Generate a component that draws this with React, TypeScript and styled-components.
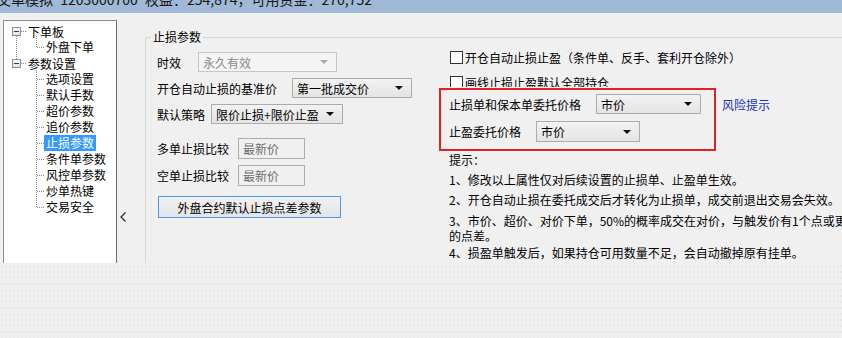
import React from "react";
import styled, { createGlobalStyle, css } from "styled-components";

const GlobalStyle = createGlobalStyle`
  html, body { margin: 0; padding: 0; background: #f0f0f0; }
  body {
    font-family: "Noto Sans CJK SC", "Liberation Sans", sans-serif;
    font-size: 12px;
    color: #000;
  }
  * { box-sizing: border-box; }
`;

const Window = styled.div`
  width: 842px;
  height: 338px;
  overflow: hidden;
  display: flex;
  flex-direction: column;
  background: #f0f0f0;
`;

const TitleBar = styled.div`
  height: 13px;
  flex: none;
  background: #9fb9d6;
  overflow: hidden;
  white-space: nowrap;
`;

const TitleText = styled.div`
  font-size: 14px;
  line-height: 14px;
  margin: -8px 0 0 -3px;
  color: #151515;
  word-spacing: 4px;
`;

const Main = styled.div`
  height: 250px;
  flex: none;
  display: flex;
  overflow: hidden;
`;

const Footer = styled.div`
  flex: 1;
  background-color: #efefef;
  background-image: radial-gradient(#e7e7e7 0.6px, transparent 0.8px);
  background-size: 4px 6px;
`;

/* 左侧树 */
const Tree = styled.div`
  width: 114px;
  height: 262px;
  flex: none;
  margin: 7px 0 0 3px;
  padding-top: 2px;
  background: #fff;
  border: 1px solid #8d8d8d;
  border-right-color: #6f6f6f;
`;

const TreeGroup = styled.div<{ $hasNext?: boolean }>`
  position: relative;
  ${(p) =>
    p.$hasNext &&
    css`
      &::after {
        content: "";
        position: absolute;
        left: 12px;
        top: 13px;
        bottom: -4px;
        border-left: 1px dotted #8c8c8c;
      }
    `}
`;

const NodeRow = styled.div`
  height: 16px;
  display: flex;
  align-items: center;
  padding-left: 8px;
  white-space: nowrap;
`;

const Expander = styled.span`
  position: relative;
  width: 9px;
  height: 9px;
  flex: none;
  margin-right: 7px;
  border: 1px solid #929292;
  background: linear-gradient(#ffffff, #e2e2e2);
  display: flex;
  align-items: center;
  justify-content: center;

  &::before {
    content: "";
    width: 5px;
    height: 1px;
    background: #1f3d99;
  }
  &::after {
    content: "";
    position: absolute;
    left: 8px;
    top: 3px;
    width: 5px;
    border-top: 1px dotted #8c8c8c;
  }
`;

const Children = styled.div`
  position: relative;
  &::before {
    content: "";
    position: absolute;
    left: 32px;
    top: -3px;
    bottom: 8px;
    border-left: 1px dotted #8c8c8c;
  }
`;

const ChildRow = styled.div`
  position: relative;
  height: 16px;
  padding-left: 40px;
  display: flex;
  align-items: center;
  white-space: nowrap;

  &::before {
    content: "";
    position: absolute;
    left: 33px;
    top: 8px;
    width: 7px;
    border-top: 1px dotted #8c8c8c;
  }
`;

const ItemLabel = styled.span<{ $selected?: boolean }>`
  line-height: 16px;
  padding: 0 2px;
  background: ${(p) => (p.$selected ? "#3399ff" : "transparent")};
  color: ${(p) => (p.$selected ? "#fff" : "#000")};
`;

const Splitter = styled.div`
  width: 28px;
  flex: none;
  display: flex;
  flex-direction: column;
  justify-content: flex-end;
  padding: 0 0 41px 3px;
`;

/* 止损参数 分组 */
const Group = styled.fieldset`
  flex: 1;
  min-width: 0;
  margin: 17px 0 0 0;
  padding: 6px 0 0 11px;
  border: 1px solid #d6d6d6;
  border-right: none;
  border-bottom: none;
  border-radius: 3px 0 0 0;
  display: flex;
`;

const Legend = styled.legend`
  margin-left: -6px;
  padding: 0 2px;
  line-height: 14px;
`;

const LeftCol = styled.div`
  width: 282px;
  flex: none;
  display: flex;
  flex-direction: column;
`;

const Row = styled.div<{ $mt?: number; $gap?: number }>`
  display: flex;
  align-items: center;
  margin-top: ${(p) => p.$mt ?? 0}px;
  gap: ${(p) => p.$gap ?? 8}px;
  white-space: nowrap;
`;

const Combo = styled.div<{ $w: number; $h?: number; $disabled?: boolean }>`
  width: ${(p) => p.$w}px;
  height: ${(p) => p.$h ?? 20}px;
  flex: none;
  display: flex;
  align-items: center;
  justify-content: space-between;
  padding: 0 8px 0 4px;
  border: 1px solid ${(p) => (p.$disabled ? "#c6c6c6" : "#acacac")};
  background: ${(p) =>
    p.$disabled ? "#f4f4f4" : "linear-gradient(#f2f2f2, #e4e4e4)"};
  color: ${(p) => (p.$disabled ? "#8a8a8a" : "#000")};
`;

const Arrow = styled.span<{ $disabled?: boolean }>`
  width: 0;
  height: 0;
  border-left: 4px solid transparent;
  border-right: 4px solid transparent;
  border-top: 4px solid ${(p) => (p.$disabled ? "#a8a8a8" : "#111")};
`;

const TextBox = styled.div<{ $w: number }>`
  width: ${(p) => p.$w}px;
  height: 21px;
  flex: none;
  display: flex;
  align-items: center;
  padding-left: 4px;
  border: 1px solid #adadad;
  background: #f0f0f0;
  color: #6d6d6d;
`;

const Button = styled.div`
  width: 183px;
  height: 22px;
  margin-left: 1px;
  display: flex;
  align-items: center;
  justify-content: center;
  border: 1px solid #4d9be6;
  background: linear-gradient(#f2f2f2, #e4e4e4);
`;

const RightCol = styled.div`
  flex: 1;
  min-width: 0;
  display: flex;
  flex-direction: column;
`;

const CheckRow = styled.div<{ $mt?: number; $clip?: boolean }>`
  display: flex;
  align-items: flex-start;
  gap: 2px;
  margin: ${(p) => p.$mt ?? 0}px 0 0 11px;
  padding-top: 1px;
  height: ${(p) => (p.$clip ? 12 : 14)}px;
  overflow: hidden;
  white-space: nowrap;
`;

const CheckBox = styled.span`
  width: 13px;
  height: 13px;
  flex: none;
  border: 1px solid #333;
  background: #fff;
`;

const CheckLabel = styled.span`
  line-height: 13px;
`;

const RedRow = styled.div`
  display: flex;
  align-items: flex-start;
  gap: 6px;
  margin-top: 1px;
`;

const RedBox = styled.div`
  width: 277px;
  height: 63px;
  flex: none;
  padding: 4px 0 0 8px;
  border: 2px solid #e2202b;
  display: flex;
  flex-direction: column;
`;

const Link = styled.span`
  margin-top: 9px;
  line-height: 16px;
  color: #1a2fc2;
  white-space: nowrap;
`;

const Tips = styled.div`
  margin: 1px 0 0 10px;
  display: flex;
  flex-direction: column;
`;

const Tip = styled.div<{ $mt?: number }>`
  margin-top: ${(p) => p.$mt ?? 0}px;
  line-height: 15px;
  white-space: nowrap;
`;

const Chevron = () => (
  <svg width="6" height="10" viewBox="0 0 6 10">
    <polyline points="5.5,0.5 1,5 5.5,9.5" fill="none" stroke="#222" strokeWidth="1.2" />
  </svg>
);

const settings = ["选项设置", "默认手数", "超价参数", "追价参数", "止损参数", "条件单参数", "风控单参数", "炒单热键", "交易安全"];

const App: React.FC = () => {
  return (
    <>
      <GlobalStyle />
      <Window>
        <TitleBar>
          <TitleText>交单模拟 1203000700 权益：254,874，可用资金：270,752</TitleText>
        </TitleBar>
        <Main>
          <Tree>
            <TreeGroup $hasNext>
              <NodeRow>
                <Expander />
                下单板
              </NodeRow>
              <Children>
                <ChildRow>
                  <ItemLabel>外盘下单</ItemLabel>
                </ChildRow>
              </Children>
            </TreeGroup>
            <TreeGroup>
              <NodeRow>
                <Expander />
                参数设置
              </NodeRow>
              <Children>
                {settings.map((name) => (
                  <ChildRow key={name}>
                    <ItemLabel $selected={name === "止损参数"}>{name}</ItemLabel>
                  </ChildRow>
                ))}
              </Children>
            </TreeGroup>
          </Tree>
          <Splitter>
            <Chevron />
          </Splitter>
          <Group>
            <Legend>止损参数</Legend>
            <LeftCol>
              <Row $mt={2} $gap={17}>
                <span>时效</span>
                <Combo $w={139} $disabled>
                  永久有效
                  <Arrow $disabled />
                </Combo>
              </Row>
              <Row $mt={6} $gap={15}>
                <span>开仓自动止损的基准价</span>
                <Combo $w={120}>
                  第一批成交价
                  <Arrow />
                </Combo>
              </Row>
              <Row $mt={6} $gap={6}>
                <span>默认策略</span>
                <Combo $w={132}>
                  限价止损+限价止盈
                  <Arrow />
                </Combo>
              </Row>
              <Row $mt={14} $gap={9}>
                <span>多单止损比较</span>
                <TextBox $w={67}>最新价</TextBox>
              </Row>
              <Row $mt={6} $gap={9}>
                <span>空单止损比较</span>
                <TextBox $w={67}>最新价</TextBox>
              </Row>
              <Row $mt={10}>
                <Button>外盘合约默认止损点差参数</Button>
              </Row>
            </LeftCol>
            <RightCol>
              <CheckRow>
                <CheckBox />
                <CheckLabel>开仓自动止损止盈（条件单、反手、套利开仓除外）</CheckLabel>
              </CheckRow>
              <CheckRow $mt={11} $clip>
                <CheckBox />
                <CheckLabel>画线止损止盈默认全部持仓</CheckLabel>
              </CheckRow>
              <RedRow>
                <RedBox>
                  <Row $gap={15}>
                    <span>止损单和保本单委托价格</span>
                    <Combo $w={105}>
                      市价
                      <Arrow />
                    </Combo>
                  </Row>
                  <Row $mt={7} $gap={15}>
                    <span>止盈委托价格</span>
                    <Combo $w={104} $h={21}>
                      市价
                      <Arrow />
                    </Combo>
                  </Row>
                </RedBox>
                <Link>风险提示</Link>
              </RedRow>
              <Tips>
                <Tip>提示：</Tip>
                <Tip $mt={5}>1、修改以上属性仅对后续设置的止损单、止盈单生效。</Tip>
                <Tip $mt={5}>2、开仓自动止损在委托成交后才转化为止损单，成交前退出交易会失效。</Tip>
                <Tip $mt={6}>
                  3、市价、超价、对价下单，50%的概率成交在对价，与触发价有1个点或更大
                  <br />
                  的点差。
                </Tip>
                <Tip $mt={2}>4、损盈单触发后，如果持仓可用数量不足，会自动撤掉原有挂单。</Tip>
              </Tips>
            </RightCol>
          </Group>
        </Main>
        <Footer />
      </Window>
    </>
  );
};

export default App;
